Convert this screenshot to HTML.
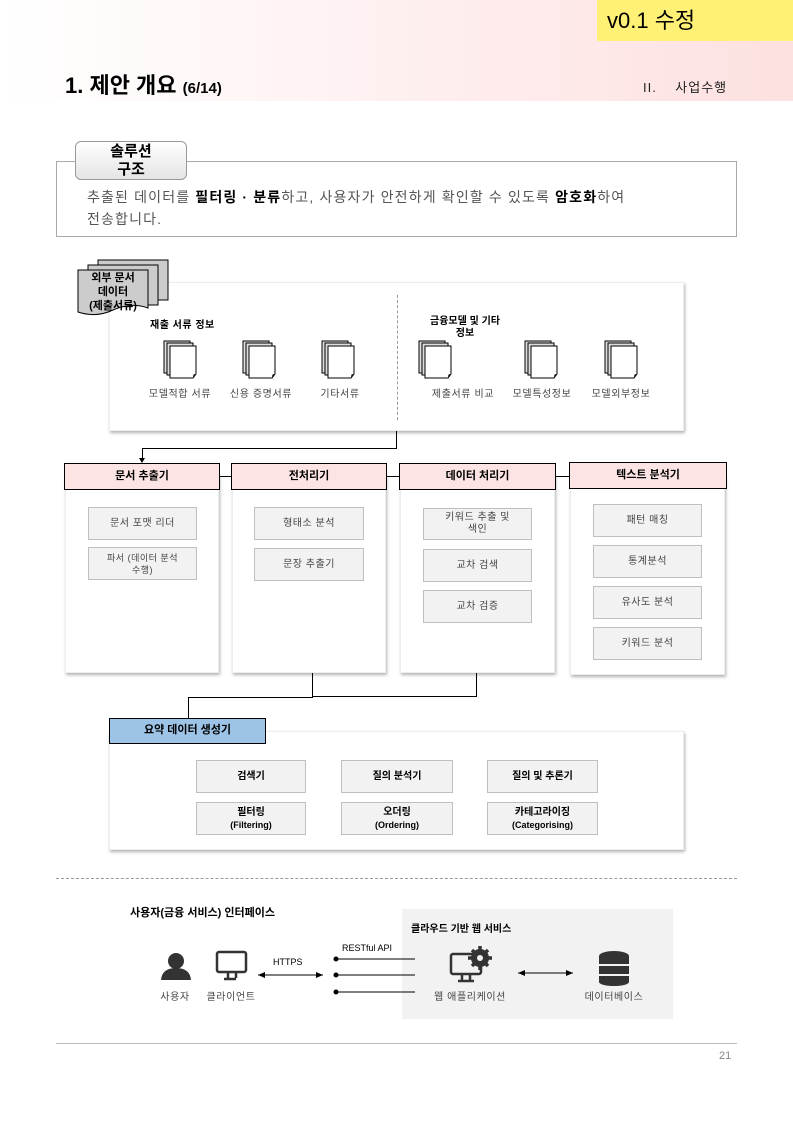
<!DOCTYPE html>
<html><head><meta charset="utf-8"><style>
*{margin:0;padding:0;box-sizing:border-box}
body{width:793px;height:1121px;position:relative;background:#fff;font-family:"Liberation Sans","Noto Sans CJK KR",sans-serif;color:#000;overflow:hidden}
.a{position:absolute}
.hdr{left:0;top:0;width:793px;height:101px;background:linear-gradient(90deg,#fff 0%,#fff3f3 40%,#fde0e0 100%)}
.panel{background:#fff;box-shadow:1px 2px 3px rgba(0,0,0,.3);border:1px solid #eee}
.ch{background:#fce4e4;border:1.5px solid #000;font-size:11px;font-weight:bold;text-align:center;line-height:24px}
.ib{background:#f2f2f2;border:1px solid #bfbfbf;font-size:10px;color:#444;display:flex;align-items:center;justify-content:center;text-align:center;line-height:12px;letter-spacing:.5px}
.sb{background:#f2f2f2;border:1px solid #bfbfbf;font-size:10px;font-weight:bold;display:flex;flex-direction:column;align-items:center;justify-content:center;text-align:center;line-height:12px}
.sb small{font-size:9px}
.lbl{font-size:10px;color:#444;text-align:center;letter-spacing:.6px}
.ln{background:#000}
</style></head><body>
<div class="a hdr"></div>
<div class="a" style="left:597px;top:0;width:196px;height:41px;background:#fff176;font-size:22px;padding:3px 0 0 10px">v0.1 수정</div>
<div class="a" style="left:65px;top:68px;font-size:22px;font-weight:bold">1. 제안 개요 <span style="font-size:15px">(6/14)</span></div>
<div class="a" style="left:643px;top:77px;font-size:13px;color:#222;letter-spacing:1px">II.&nbsp;&nbsp;&nbsp;&nbsp;사업수행</div>

<div class="a" style="left:56px;top:161px;width:681px;height:76px;border:1px solid #aaa"></div>
<div class="a" style="left:75px;top:141px;width:112px;height:39px;border:1px solid #999;border-radius:6px;background:linear-gradient(#fff,#e4e4e4);font-size:15px;font-weight:bold;text-align:center;line-height:18px;padding-top:1px">솔루션<br>구조</div>
<div class="a" style="left:87px;top:186px;font-size:14px;color:#555;line-height:22px;letter-spacing:1.15px">추출된 데이터를 <b style="color:#000">필터링 · 분류</b>하고, 사용자가 안전하게 확인할 수 있도록 <b style="color:#000">암호화</b>하여<br>전송합니다.</div>

<!-- upper panel -->
<div class="a panel" style="left:109px;top:282px;width:575px;height:149px"></div>
<svg class="a" style="left:76px;top:258px" width="95" height="60">
<rect x="22" y="2" width="70" height="40" fill="#ccc" stroke="#000"/>
<rect x="12" y="7" width="70" height="40" fill="#ccc" stroke="#000"/>
<path d="M2 12 H72 V50 Q55 44 37 52 Q20 60 2 54 Z" fill="#ccc" stroke="#000"/>
<text x="37" y="23" font-size="11" font-weight="bold" text-anchor="middle" font-family="Liberation Sans,Noto Sans CJK KR,sans-serif">외부 문서</text>
<text x="37" y="37" font-size="11" font-weight="bold" text-anchor="middle" font-family="Liberation Sans,Noto Sans CJK KR,sans-serif">데이터</text>
<text x="37" y="51" font-size="11" font-weight="bold" text-anchor="middle" font-family="Liberation Sans,Noto Sans CJK KR,sans-serif">(제출서류)</text>
</svg>
<div class="a" style="left:397px;top:295px;height:125px;border-left:1px dashed #999"></div>
<div class="a" style="left:150px;top:316px;font-size:10px;font-weight:bold;letter-spacing:.5px">재출 서류 정보</div>
<div class="a" style="left:420px;top:316px;width:90px;font-size:10px;font-weight:bold;text-align:center;line-height:12px">금융모델 및 기타<br>정보</div>
<svg class="a" style="left:0;top:0" width="793" height="400">
<defs><g id="d"><rect x="0" y="0" width="26" height="32" fill="#ddd" stroke="#000"/><rect x="3" y="2" width="26" height="32" fill="#ddd" stroke="#000"/><path d="M6 5 H32 V33 L29 37 H6 Z" fill="#fff" stroke="#000"/><path d="M29 37 L29.5 33.5 L32 33" fill="#000"/></g></defs>
<use href="#d" x="164" y="341"/><use href="#d" x="243" y="341"/><use href="#d" x="322" y="341"/>
<use href="#d" x="419" y="341"/><use href="#d" x="525" y="341"/><use href="#d" x="605" y="341"/>
</svg>
<div class="a lbl" style="left:140px;top:385px;width:80px">모델적합 서류</div>
<div class="a lbl" style="left:221px;top:385px;width:80px">신용 증명서류</div>
<div class="a lbl" style="left:300px;top:385px;width:80px">기타서류</div>
<div class="a lbl" style="left:418px;top:385px;width:90px">제출서류 비교</div>
<div class="a lbl" style="left:502px;top:385px;width:80px">모델특성정보</div>
<div class="a lbl" style="left:581px;top:385px;width:80px">모델외부정보</div>

<!-- connectors -->
<div class="a ln" style="left:396px;top:431px;width:1px;height:18px"></div>
<div class="a ln" style="left:142px;top:448px;width:255px;height:1px"></div>
<div class="a ln" style="left:142px;top:448px;width:1px;height:12px"></div>
<div class="a" style="left:139px;top:458px;border-left:3px solid transparent;border-right:3px solid transparent;border-top:5px solid #000"></div>
<div class="a ln" style="left:219px;top:476px;width:12px;height:1px"></div>
<div class="a ln" style="left:386px;top:476px;width:13px;height:1px"></div>
<div class="a ln" style="left:556px;top:476px;width:13px;height:1px"></div>

<!-- columns -->
<div class="a panel" style="left:65px;top:475px;width:154px;height:198px"></div>
<div class="a panel" style="left:232px;top:475px;width:154px;height:198px"></div>
<div class="a panel" style="left:400px;top:475px;width:155px;height:198px"></div>
<div class="a panel" style="left:570px;top:475px;width:155px;height:200px"></div>
<div class="a ch" style="left:64px;top:463px;width:156px;height:27px">문서 추출기</div>
<div class="a ch" style="left:231px;top:463px;width:156px;height:27px">전처리기</div>
<div class="a ch" style="left:399px;top:463px;width:157px;height:27px">데이터 처리기</div>
<div class="a ch" style="left:569px;top:462px;width:158px;height:27px">텍스트 분석기</div>

<div class="a ib" style="left:88px;top:507px;width:109px;height:33px">문서 포맷 리더</div>
<div class="a ib" style="left:88px;top:547px;width:109px;height:33px;font-size:9px">파서 (데이터 분석<br>수행)</div>
<div class="a ib" style="left:254px;top:507px;width:110px;height:33px">형태소 분석</div>
<div class="a ib" style="left:254px;top:548px;width:110px;height:33px">문장 추출기</div>
<div class="a ib" style="left:423px;top:508px;width:109px;height:32px">키워드 추출 및<br>색인</div>
<div class="a ib" style="left:423px;top:549px;width:109px;height:33px">교차 검색</div>
<div class="a ib" style="left:423px;top:590px;width:109px;height:33px">교차 검증</div>
<div class="a ib" style="left:593px;top:504px;width:109px;height:33px">패턴 매칭</div>
<div class="a ib" style="left:593px;top:545px;width:109px;height:33px">통계분석</div>
<div class="a ib" style="left:593px;top:586px;width:109px;height:33px">유사도 분석</div>
<div class="a ib" style="left:593px;top:627px;width:109px;height:33px">키워드 분석</div>

<div class="a ln" style="left:312px;top:673px;width:1px;height:24px"></div>
<div class="a ln" style="left:476px;top:673px;width:1px;height:23px"></div>
<div class="a ln" style="left:312px;top:696px;width:165px;height:1px"></div>
<div class="a ln" style="left:188px;top:697px;width:125px;height:1px"></div>
<div class="a ln" style="left:188px;top:697px;width:1px;height:21px"></div>

<div class="a panel" style="left:109px;top:731px;width:575px;height:119px"></div>
<div class="a" style="left:109px;top:718px;width:157px;height:26px;background:#9dc3e6;border:1.5px solid #000;font-size:11px;font-weight:bold;text-align:center;line-height:23px">요약 데이터 생성기</div>
<div class="a sb" style="left:196px;top:760px;width:110px;height:33px">검색기</div>
<div class="a sb" style="left:341px;top:760px;width:112px;height:33px">질의 분석기</div>
<div class="a sb" style="left:487px;top:760px;width:111px;height:33px">질의 및 추론기</div>
<div class="a sb" style="left:196px;top:802px;width:110px;height:33px">필터링<small>(Filtering)</small></div>
<div class="a sb" style="left:341px;top:802px;width:112px;height:33px">오더링<small>(Ordering)</small></div>
<div class="a sb" style="left:487px;top:802px;width:111px;height:33px">카테고라이징<small>(Categorising)</small></div>

<div class="a" style="left:56px;top:878px;width:681px;border-top:1px dashed #999"></div>

<!-- bottom -->
<div class="a" style="left:402px;top:909px;width:271px;height:110px;background:#f2f2f2"></div>
<div class="a" style="left:130px;top:904px;font-size:11px;font-weight:bold">사용자(금융 서비스) 인터페이스</div>
<div class="a" style="left:411px;top:920px;font-size:10px;font-weight:bold">클라우드 기반 웹 서비스</div>
<div class="a" style="left:342px;top:943px;font-size:9px">RESTful API</div>
<div class="a" style="left:273px;top:957px;font-size:9px">HTTPS</div>
<svg class="a" style="left:0;top:0" width="793" height="1121">
<g fill="#333">
<circle cx="176" cy="961" r="8"/><path d="M161 980 Q162 968 176 968 Q190 968 191 980 Z"/>
</g>
<g fill="none" stroke="#333" stroke-width="2.5">
<rect x="217" y="952" width="29" height="20" rx="2"/>
</g>
<path d="M228 972 V978 M224 979 H236 M236 972 V978" stroke="#333" stroke-width="2.5"/>
<g fill="none" stroke="#333" stroke-width="2.5"><rect x="451" y="954" width="30" height="20" rx="2"/></g>
<path d="M462 974 V980 M458 981 H474 M470 974 V980" stroke="#333" stroke-width="2.5"/>
<circle cx="480" cy="958" r="9" fill="#333"/>
<g stroke="#333" stroke-width="3.5"><path d="M480 946 V970 M468 958 H492 M472 950 L488 966 M488 950 L472 966"/></g>
<circle cx="480" cy="958" r="3" fill="#f2f2f2"/>
<g fill="#333"><ellipse cx="614" cy="956" rx="15" ry="5"/><rect x="599" y="956" width="30" height="8"/><rect x="599" y="966" width="30" height="8"/><rect x="599" y="976" width="30" height="6"/><ellipse cx="614" cy="982" rx="15" ry="4"/></g>
<g stroke="#000" stroke-width="1"><path d="M258 975 H323"/><path d="M336 959 H415 M336 975 H415 M336 992 H415"/><path d="M518 973 H573"/></g>
<g fill="#000"><path d="M258 975 l7 -3 v6 z M323 975 l-7 -3 v6 z M518 973 l7 -3 v6 z M573 973 l-7 -3 v6 z"/><circle cx="336" cy="959" r="2.5"/><circle cx="336" cy="975" r="2.5"/><circle cx="336" cy="992" r="2.5"/></g>
</svg>
<div class="a lbl" style="left:150px;top:988px;width:50px">사용자</div>
<div class="a lbl" style="left:196px;top:988px;width:70px">클라이언트</div>
<div class="a lbl" style="left:410px;top:988px;width:120px">웹 애플리케이션</div>
<div class="a lbl" style="left:574px;top:988px;width:80px">데이터베이스</div>

<div class="a" style="left:56px;top:1043px;width:681px;border-top:1px solid #bbb"></div>
<div class="a" style="left:719px;top:1050px;font-size:11px;color:#888">21</div>
</body></html>
